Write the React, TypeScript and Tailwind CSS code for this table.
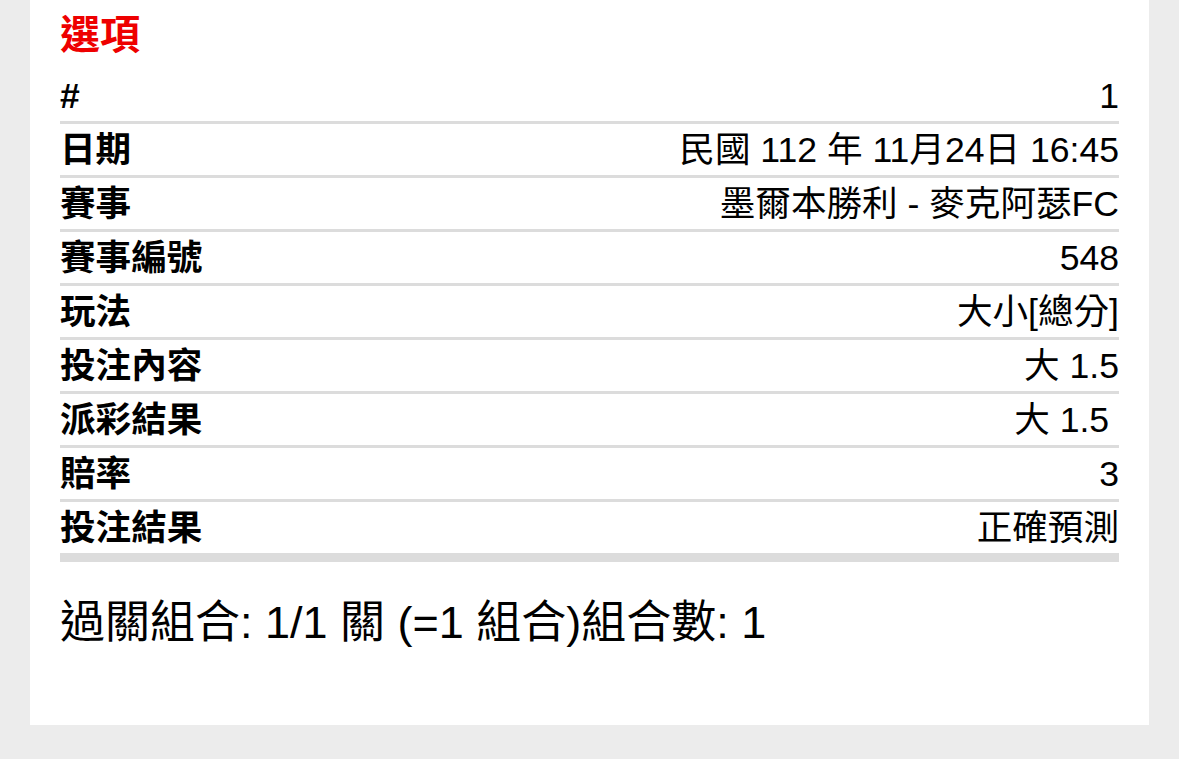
import React from "react";

const rows: [string, string][] = [
  ["#", "1"],
  ["日期", "民國 112 年 11月24日 16:45"],
  ["賽事", "墨爾本勝利 - 麥克阿瑟FC"],
  ["賽事編號", "548"],
  ["玩法", "大小[總分]"],
  ["投注內容", "大 1.5"],
  ["派彩結果", "大 1.5\u00a0"],
  ["賠率", "3"],
  ["投注結果", "正確預測"],
];

export default function App() {
  return (
    <div
      className="w-[1179px] h-[759px] bg-[#ececec] overflow-hidden"
      style={{ fontFamily: '"Liberation Sans", "Noto Sans CJK TC", Arial, sans-serif' }}
    >
      <div className="ml-[30px] w-[1119px] h-[725px] bg-white px-[30px] pt-[11px]">
        <h2 className="text-[40px] leading-[48px] font-bold text-[#ee0000]">選項</h2>
        <div className="mt-[11px]">
          {rows.map(([k, v], i) => (
            <div
              key={k}
              className={`flex items-center justify-between h-[54px] pt-[1px] text-[35.6px] leading-[40px] text-black border-[#dcdcdc] ${
                i === rows.length - 1 ? "border-b-[9px] h-[60px]" : "border-b-[3px]"
              }`}
            >
              <span className="font-bold whitespace-pre">{k}</span>
              <span className="whitespace-pre">{v}</span>
            </div>
          ))}
        </div>
        <div className="mt-[35px] text-[45px] leading-[52px] text-black whitespace-pre">
          過關組合: 1/1 關 (=1 組合)組合數: 1
        </div>
      </div>
    </div>
  );
}
